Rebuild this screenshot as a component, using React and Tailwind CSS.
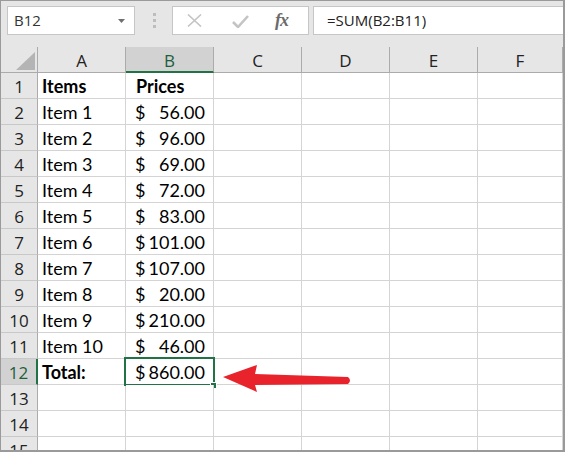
import React from "react";

const data = [
  { a: "Items", b: "Prices", bold: true, header: true },
  { a: "Item 1", b: "56.00" },
  { a: "Item 2", b: "96.00" },
  { a: "Item 3", b: "69.00" },
  { a: "Item 4", b: "72.00" },
  { a: "Item 5", b: "83.00" },
  { a: "Item 6", b: "101.00" },
  { a: "Item 7", b: "107.00" },
  { a: "Item 8", b: "20.00" },
  { a: "Item 9", b: "210.00" },
  { a: "Item 10", b: "46.00" },
  { a: "Total:", b: "860.00", bold: true, selected: true },
  {},
  {},
  {},
];

const cols = ["A", "B", "C", "D", "E", "F"];

function Cell({ children, className = "" }) {
  return (
    <div className={"h-[26px] border-r border-b border-[#d4d4d4] bg-white " + className}>
      {children}
    </div>
  );
}

export default function App() {
  return (
    <div className="relative w-[565px] h-[452px] overflow-hidden bg-[#e6e6e6] border-t border-l border-r-2 border-b-2 border-[#9a9a9a] font-['Open_Sans',sans-serif] text-[#222]">
      {/* Toolbar */}
      <div className="h-[46px] flex items-start pt-[5px]">
        <div className="ml-[6px] w-[128px] h-[29px] bg-white border border-[#c6c6c6] flex items-center justify-between pl-[6px] pr-[9px] text-[15px] text-[#333]">
          <span className="leading-none">B12</span>
          <svg width="7" height="4" viewBox="0 0 7 4">
            <polygon points="0,0 7,0 3.5,4" fill="#6f6f6f" />
          </svg>
        </div>
        <div className="w-[37px] h-[29px] flex flex-col items-center justify-center gap-[3px] pl-[1px]">
          <div className="w-[3px] h-[3px] bg-[#bdbdbd]" />
          <div className="w-[3px] h-[3px] bg-[#bdbdbd]" />
          <div className="w-[3px] h-[3px] bg-[#bdbdbd]" />
        </div>
        <div className="w-[137px] h-[29px] bg-white border border-[#c6c6c6] flex items-center">
          <svg className="ml-[14px]" width="15" height="13" viewBox="0 0 15 13">
            <path d="M1 0.5 L14 12.5 M14 0.5 L1 12.5" stroke="#c4c4c4" strokeWidth="1.6" fill="none" />
          </svg>
          <svg className="ml-[30px] mt-[2px]" width="17" height="13" viewBox="0 0 17 13">
            <path d="M1 7 L6 12 L16 1" stroke="#c4c4c4" strokeWidth="2.6" fill="none" />
          </svg>
          <span className="ml-[26px] font-['Liberation_Serif',serif] italic font-bold text-[18px] text-[#6b6b6b] leading-none tracking-[-1px] -mt-[2px]">
            fx
          </span>
        </div>
        <div className="ml-[4px] flex-1 h-[29px] bg-white border border-r-0 border-[#c6c6c6] flex items-center pl-[13px] text-[15px] text-[#222]">
          <span className="leading-none">=SUM(B2:B11)</span>
        </div>
      </div>

      {/* Grid */}
      <div className="grid grid-cols-[37px_88px_88px_88px_88px_88px_85px]">
        {/* Header row */}
        <div className="h-[26px] bg-[#e6e6e6] border-r border-b border-[#ababab] flex items-end justify-end pr-[2px] pb-[2px]">
          <svg width="19" height="18" viewBox="0 0 19 18">
            <polygon points="19,0 19,18 0,18" fill="#b4b4b4" />
          </svg>
        </div>
        {cols.map((c) =>
          c === "B" ? (
            <div
              key={c}
              className="h-[26px] bg-[#d2d2d2] border-r border-[#ababab] border-b-2 border-b-[#217346] flex items-center justify-center pt-[2px] text-[17px] text-[#1d5f3b] leading-[25px]"
            >
              {c}
            </div>
          ) : (
            <div
              key={c}
              className="h-[26px] bg-[#e6e6e6] border-r border-b border-[#ababab] flex items-center justify-center pt-[2px] text-[17px] leading-[25px]"
            >
              {c}
            </div>
          )
        )}

        {data.map((r, i) => (
          <React.Fragment key={i}>
            {r.selected ? (
              <div className="h-[26px] bg-[#d2d2d2] border-b border-[#c8c8c8] border-r-2 border-r-[#217346] flex items-center justify-center text-[17px] text-[#1d5f3b] leading-[25px] pt-[1px]">
                {i + 1}
              </div>
            ) : (
              <div className="h-[26px] bg-[#e6e6e6] border-b border-[#c8c8c8] border-r border-r-[#ababab] flex items-center justify-center text-[17px] leading-[25px] pt-[1px]">
                {i + 1}
              </div>
            )}
            <Cell className={"pl-[4px] pt-[1px] font-['Lato',sans-serif] text-[18px] leading-[24px] text-black " + (r.bold ? "font-bold" : "")}>
              {r.a}
            </Cell>
            <Cell className={"relative pt-[1px] font-['Lato',sans-serif] text-[18px] leading-[24px] text-black " + (r.bold ? "font-bold" : "")}>
              {r.header ? (
                <span className="pl-[10px]">{r.b}</span>
              ) : r.b ? (
                <div className="flex justify-between pl-[9px] pr-[8px] font-normal">
                  <span>$</span>
                  <span>{r.b}</span>
                </div>
              ) : null}
              {r.selected && (
                <>
                  <div className="absolute -left-[2px] -top-[2px] w-[91px] h-[29px] border-2 border-[#217346]" />
                  <div className="absolute left-[84px] top-[23px] w-[7px] h-[7px] bg-[#217346] border border-white" />
                </>
              )}
            </Cell>
            <Cell />
            <Cell />
            <Cell />
            <Cell />
          </React.Fragment>
        ))}
      </div>

      {/* Red arrow annotation */}
      <svg className="absolute left-0 top-0 pointer-events-none" width="565" height="452" viewBox="0 0 565 452">
        <path
          d="M222 376 L256 364 L254 373 L347 376 Q351 379.5 347 383 L254 384 L256 391 Z"
          fill="#e8232b"
        />
      </svg>
    </div>
  );
}
